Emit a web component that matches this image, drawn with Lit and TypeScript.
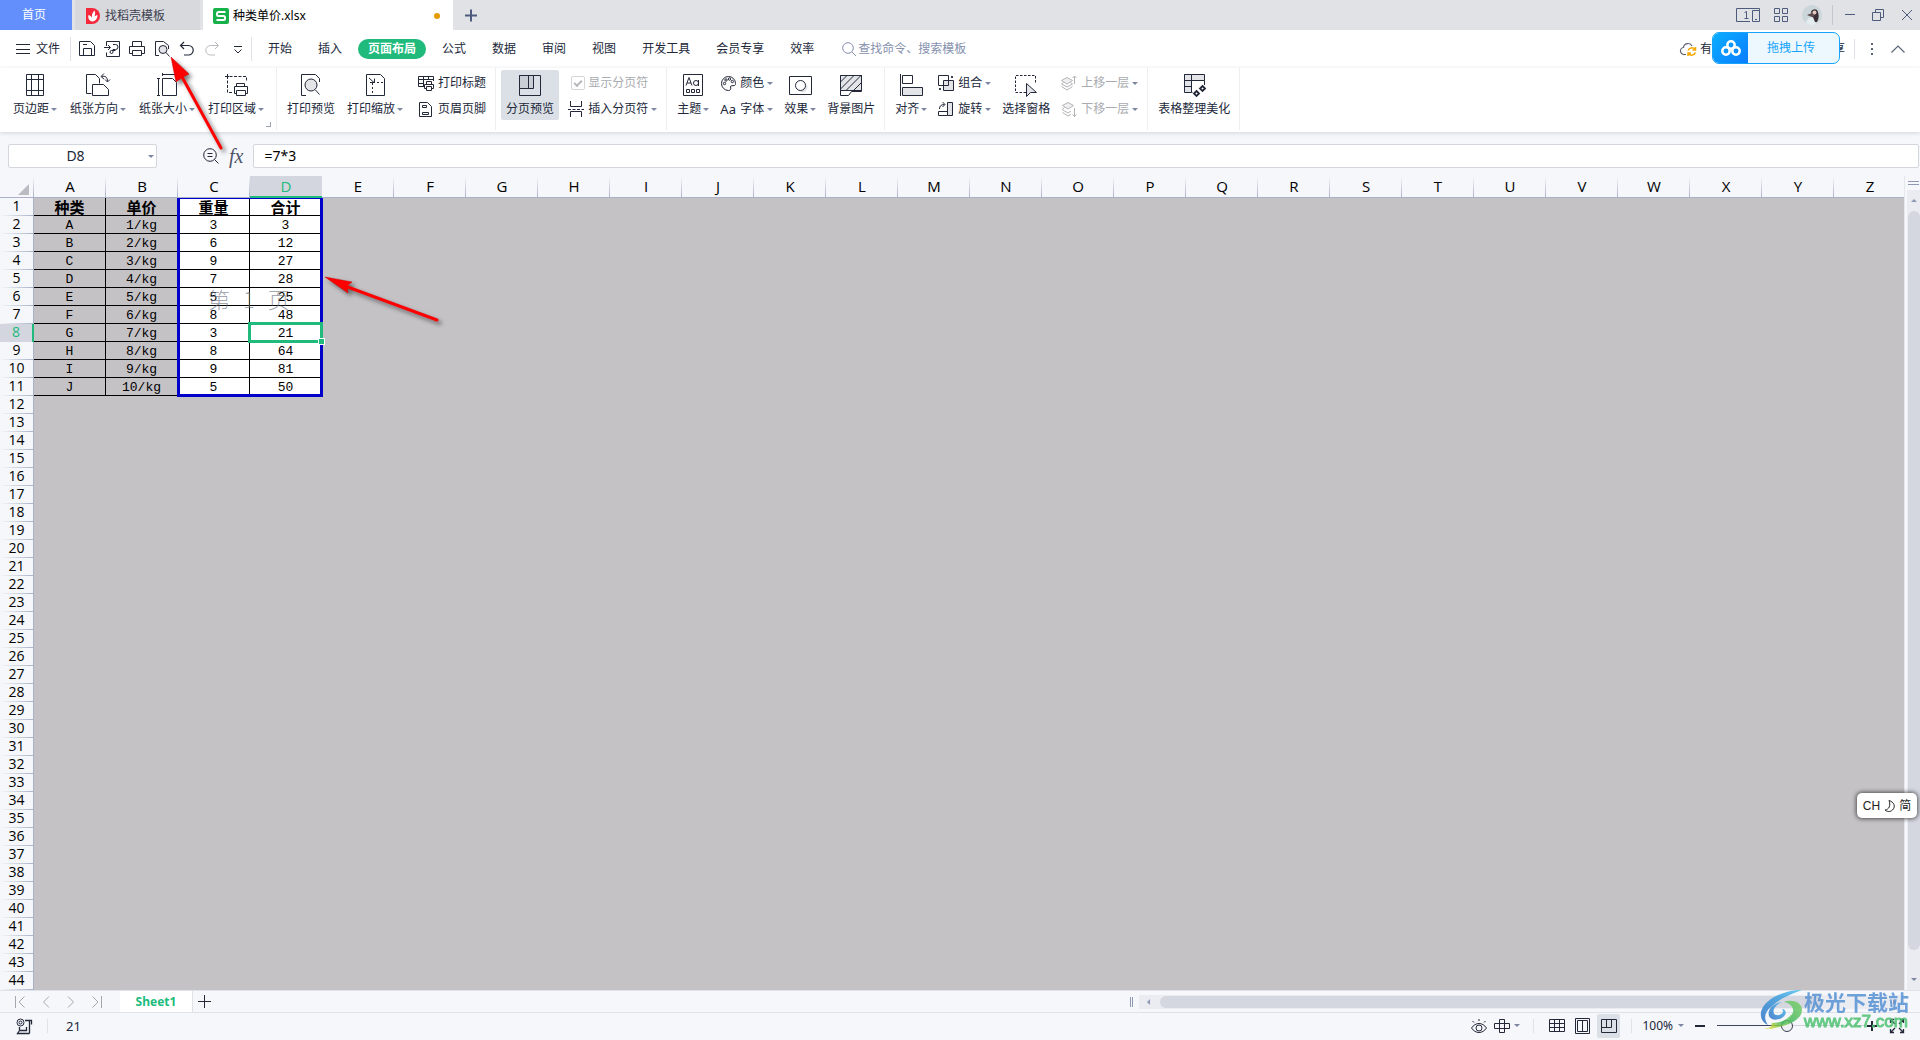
import { LitElement, html, css, svg, nothing, TemplateResult, SVGTemplateResult } from "lit";
import { customElement, property, state } from "lit/decorators.js";
import { classMap } from "lit/directives/class-map.js";

const icon = (w: number, h: number, body: SVGTemplateResult) => html`
  <svg class="ic" width=${w} height=${h} viewBox="0 0 ${w} ${h}" aria-hidden="true">${body}</svg>
`;

const SHADE = "#e2e4e7";

/* 16px glyphs */
const small: Record<string, SVGTemplateResult> = {
  save: svg`<path d="M.5.500h11l4 4v10H.5zM4.500 14.500v-7h8v7M4 3.500h4"/>`,
  exportPdf: svg`<path d="M2.500 5V.500h13v15h-13v-4M0 6.500h6M4 4l2.500 2.500L4 9M9 3.500h2.500a2 2 0 0 1 0 5H9M9 8.500v2.500a1.500 1.500 0 1 1-1.500-1.500h4"/>`,
  print: svg`<path d="M3.500 5.500v-5h9v5M3.500 12.500h-3v-7h15v7h-3M3.500 9.500h9v5h-9z"/>`,
  preview: svg`<circle cx="9" cy="8.500" r="4" fill=${SHADE}/><path d="M12 11.500l3.500 4M5 14.500H1.500V.500h8l5 4V8"/>`,
  undo: svg`<path d="M5 1L1.500 4.500L5 8M2 4.500h7.500a4.500 4.500 0 0 1 0 9.500H5" stroke-width="1.200"/>`,
  redo: svg`<g stroke="#b9bbc0"><path d="M11 1L14.500 4.500L11 8M14 4.500H6.500a4.500 4.500 0 0 0 0 9.500H11"/></g>`,
  more: svg`<path d="M5 5.500h8M5.500 8.500l3.500 3.500l3.500-3.500"/>`,
  printTitle: svg`<path d="M6 11.500H.5v-10h15V6M.5 4.500h15M5.500 1.500v10M10.500 1.500v3M.5 8.500h5M8.500 9.500V6.500h5v3M8.500 13.500h-2v-4h9v4h-2M8.500 11.500h5v4h-5z"/>`,
  headerFooter: svg`<path d="M1.500 1.500h8l4 4v10h-12z"/><path d="M4.500 4.500h4v2h-4zM4.500 11.500h6v2h-6z"/>`,
  insertBreak: svg`<path d="M2.500 0v5.500h11V0M2.500 16v-5.500h11V16"/><path d="M0 8.500h16" stroke-dasharray="3 1.500"/>`,
  palette: svg`<path d="M14.500 10.500c-2 .5-4-.5-4 1.500c.5 1.500.5 3.500-2 3.500a7 7 0 1 1 7-7c0 1 0 1.500-1 2z"/><circle cx="4.500" cy="8.500" r="1.200"/><circle cx="6" cy="5" r="1.200"/><circle cx="9.500" cy="4" r="1.200"/><circle cx="12.300" cy="6.500" r="1.200"/>`,
  group: svg`<path d="M.5.500h10v10H.5z"/><path d="M5.500 5.500h10v10h-10z" fill=${SHADE}/><path d="M10.500 5v5.500H5"/><path d="M13 1h2v2h-2zM1 13h2v2H1z" fill="#3a4252" stroke="none"/>`,
  rotate: svg`<path d="M9.500 1.500h5v13h-5z" fill=${SHADE}/><path d="M9.500 14.500h-9v-4h9M1.500 8c0-3 1.500-4.500 5-4.500M4.500 1L7 3.500L4.500 6"/>`,
  bringUp: svg`<g stroke="#b3b4b8"><path d="M.5 5.500L6 2.500l5.500 3L6 9z" fill="#f0f0f1"/><path d="M2.500 7.500L.5 9L6 12l5.500-3l-2-1.500M.5 11.500l5.500 3.500l5.500-3.500M13.500 9V1M11.500 3L13.500 1l2 2"/></g>`,
  sendDown: svg`<g stroke="#b3b4b8"><path d="M1.500 4.500L7 1.500l5.500 3L7 8z" fill="#f0f0f1"/><path d="M3.500 6.500l-2.500 2L7 12l3-2M1.500 11.500l5.500 3.500l3-1.500M13.500 7v8.500M11.500 13.500l2 2l2-2"/></g>`,
};

/* 24px glyphs */
const large: Record<string, SVGTemplateResult> = {
  margins: svg`<path d="M3.500 1.500h17v21h-17zM8.500 1.500v21M15.500 1.500v21M3.500 6.500h17M3.500 17.500h17"/>`,
  orientation: svg`<path d="M5.500 20.500h-5v-19h9l4 4v5"/><path d="M6.500 11.500h11l5 5v6h-16z"/><path d="M15.500 3.500c4-1 6 1 6 5M18 .5l-3 3l3 2.500M19 6.500l2.500 2.500L24 6.500"/>`,
  size: svg`<path d="M7.500 5.500h10l4 4v13h-14zM3.500 5v18M2 5.500h3M2 22.500h3M7 1.500h16M7.500 0v3M22.500 0v3"/>`,
  area: svg`<path d="M8 19.500H3.500v-16h19V9" stroke-dasharray="3 1.500"/><path d="M1 3.500h4M3.500 1v4M12.500 13.500v-3h8v3M12.500 20.500h-2v-7h13v7h-2M12.500 17.500h9v5h-9z"/>`,
  preview: svg`<path d="M7 22.500H2.500v-21h14l4 4V9"/><circle cx="12" cy="12" r="6" fill=${SHADE}/><path d="M16.500 17l4 4.500"/>`,
  scale: svg`<path d="M3.500 1.500h14l4 4v17h-18z"/><path d="M10 9.500h11M9.500 10v12" stroke-dasharray="2 2"/><path d="M6 5l5 4.500M11.500 5.500v4H7"/>`,
  pageBreak: svg`<path d="M1.500 2.500h21v20h-21z"/><path d="M1.500 2.500h14v13h-14z" fill="#c9ced6"/><path d="M10.500 2.500v13"/>`,
  theme: svg`<path d="M2.500 1.500h19v21h-19z"/><path d="M5.500 16.500h3v3h-3zM10.500 16.500h3v3h-3zM15.500 16.500h3v3h-3z"/><path d="M5 12.500L8 4.500l3 8M6 10h4"/><circle cx="15" cy="10" r="2.500"/><path d="M17.500 7v6"/>`,
  effect: svg`<path d="M1.500 3.500h22v18h-22z"/><circle cx="14.500" cy="14.500" r="5" fill=${SHADE} stroke="none"/><circle cx="12.500" cy="12.500" r="5" fill="#fff"/>`,
  background: svg`<path d="M1.500 2.500h21v16h-10l-3 4h-8z" fill="#fff"/><path d="M1.500 2.500h21v15h-21z" fill=${SHADE}/><path d="M1.500 9L8 2.500M1.500 16L15 2.500M7 17.500L22 2.500M14.500 17.500l8-8"/>`,
  align: svg`<path d="M1.500 1v22"/><path d="M3.500 2.500h10v8h-10z"/><path d="M3.500 14.500h20v8h-20z" fill=${SHADE}/>`,
  selectPane: svg`<path d="M12 19.500H1.500v-17h20V11" stroke-dasharray="2.500 1.500"/><path d="M12.500 10.500v13l4-4h6z" fill=${SHADE}/>`,
  beautify: svg`<path d="M2.500 1.500h20v6h-20z" fill=${SHADE}/><path d="M2.500 1.500h7v18h-7z" fill=${SHADE}/><path d="M22.500 8v4M9.500 19.500h1M2.500 7.500h20M2.500 13.500h7"/><g fill="#fff" stroke-width="1.800"><path d="M20.500 13l2.500 2.500l-2.500 2.500l-2.500-2.500z"/><path d="M14.500 18l2.500 2.500l-2.500 2.500l-2.500-2.500z"/></g>`,
};

const iconStyles = css`
  .ic {
    display: block;
    flex: none;
    fill: none;
    stroke: #232839;
    stroke-width: 1;
    overflow: visible;
  }
  button {
    font: inherit;
    color: inherit;
    background: none;
    border: 0;
    margin: 0;
    padding: 0;
    display: flex;
    align-items: center;
    white-space: nowrap;
  }
  input {
    font: inherit;
    color: inherit;
    margin: 0;
    box-sizing: border-box;
    outline: none;
  }
  .caret {
    width: 0;
    height: 0;
    border: 3px solid transparent;
    border-top: 3px solid #7d86a0;
    border-bottom: 0;
    flex: none;
  }
`;

@customElement("title-bar")
class TitleBar extends LitElement {
  static styles = [
    iconStyles,
    css`
      :host {
        display: flex;
        height: 30px;
        background: #e1e2e6;
        color: #3d4150;
      }
      .tab {
        padding: 0 0 0 10px;
        gap: 4px;
        box-sizing: border-box;
      }
      .home {
        width: 72px;
        justify-content: center;
        background: #628ffb;
        color: #fff;
        padding: 0 4px 0 0;
        margin-right: 3px;
      }
      .store {
        width: 125px;
        background: #d8d9dd;
        margin-right: 3px;
        padding-top: 2px;
      }
      .doc {
        width: 250px;
        background: #fff;
        color: #000;
        padding-top: 2px;
      }
      .dot {
        width: 6px;
        height: 6px;
        border-radius: 50%;
        background: #e69a00;
        margin: 0 13px 0 auto;
      }
      .add {
        padding: 0 11px;
      }
      .right,
      .apps {
        display: flex;
        align-items: center;
      }
      .right {
        margin-left: auto;
      }
      .apps {
        gap: 14px;
      }
      .wins {
        display: flex;
        align-items: center;
        gap: 17px;
        height: 20px;
        border-left: 1px solid #c3c6cf;
        margin: 0 7px 0 10px;
        padding-left: 12px;
      }
      .ic {
        stroke: #4d5b7c;
      }
    `,
  ];
  render() {
    return html`
      <button class="tab home">首页</button>
      <button class="tab store">
        ${icon(16, 16, svg`<path d="M1 0h6a8 8 0 0 1 0 16H1z" fill="#f5283c" stroke="none"/><path d="M7.500 13.500C4 13 2.500 9.500 3.500 7c2 .5 3 1.500 3.500 3C6.500 7 7.500 4 9.500 2.500c1 2 .8 4 0 6c1-1 2-1.500 3-1.500c0 3.500-2 6-5 6.500z" fill="#fff" stroke="none"/>`)}
        找稻壳模板
      </button>
      <button class="tab doc">
        ${icon(16, 16, svg`<rect width="16" height="16" rx="2" fill="#16b14b" stroke="none"/><path d="M12.500 4H5.500a1.500 1.500 0 0 0-1.500 1.500v1A1.500 1.500 0 0 0 5.500 8h5a1.500 1.500 0 0 1 1.500 1.500v1a1.500 1.500 0 0 1-1.500 1.500H3.500" stroke="#fff" stroke-width="2"/>`)}
        种类单价.xlsx<span class="dot"></span>
      </button>
      <button class="add" aria-label="+">
        ${icon(14, 14, svg`<path d="M7 1.500v12M1 7.500h12" stroke-width="2"/>`)}
      </button>
      <div class="right">
        <div class="apps">
          ${icon(24, 14, svg`<path d="M14 13.500H.5V.500h23v2M8.500 4.500l2-1v7.500M8.500 10.500h4M16.500 2.500h7v11h-7zM19 11.500h2"/>`)}
          ${icon(14, 14, svg`<path d="M.5.500h5v5h-5zM8.500.500h5v5h-5zM.5 8.500h5v5h-5zM8.500 8.500h5v5h-5z"/>`)}
          ${icon(20, 20, svg`<circle cx="10" cy="10" r="10" fill="#cbd6da" stroke="none"/><g stroke="none"><path d="M4 18c1-4 3-6 7-6l3 7a10 10 0 0 1-10-1z" fill="#e3edf0"/><path d="M9 7c1-3 6-4 7 0c1 3 1 7-1 10h-2l-2-5z" fill="#3a2f36"/><path d="M5 10l6-2.500l2 2l-2 3z" fill="#5d4b50"/><circle cx="12.500" cy="7.500" r="2" fill="#e5c8bd"/></g>`)}
        </div>
        <div class="wins">
          ${icon(10, 12, svg`<path d="M0 5.500h10"/>`)}
          ${icon(12, 12, svg`<path d="M.5 3.500h8v8h-8zM3.500 3.500v-3h8v8h-3"/>`)}
          ${icon(12, 12, svg`<path d="M1 1l10 10M11 1L1 11"/>`)}
        </div>
      </div>
    `;
  }
}

@customElement("menu-bar")
class MenuBar extends LitElement {
  @state() active = "页面布局";
  static styles = [
    iconStyles,
    css`
      :host {
        display: flex;
        align-items: center;
        height: 38px;
        background: #fff;
        color: #21283a;
      }
      .file {
        padding: 0 10px 0 16px;
        gap: 6px;
      }
      .quick {
        display: flex;
        align-items: center;
        gap: 9px;
        height: 24px;
        padding: 0 6px 0 8px;
        border: 1px solid #dfe1e6;
        border-width: 0 1px;
      }
      nav {
        display: flex;
        gap: 6px;
        padding-left: 6px;
      }
      .item {
        height: 20px;
        padding: 0 10px;
        border-radius: 10px;
      }
      .on {
        background: #20bb7c;
        color: #fff;
        font-weight: 700;
      }
      .search {
        display: flex;
        align-items: center;
        gap: 2px;
        margin-left: 18px;
      }
      .search input {
        width: 130px;
        border: 0;
        padding: 0;
        background: none;
      }
      .search input::placeholder {
        color: #8590ad;
        opacity: 1;
      }
      .search .ic {
        stroke: #8590ad;
      }
      .right {
        display: flex;
        align-items: center;
        margin: 0 15px 0 auto;
      }
      .sync {
        gap: 4px;
      }
      .share {
        margin-left: 121px;
        padding-right: 9px;
        border-right: 1px solid #dfe1e6;
        height: 20px;
      }
      .dots {
        margin: 0 17px 0 15px;
      }
    `,
  ];
  render() {
    const tabs = ["开始", "插入", "页面布局", "公式", "数据", "审阅", "视图", "开发工具", "会员专享", "效率"];
    return html`
      <button class="file">${icon(14, 10, svg`<path d="M0 .5h14M0 5.500h14M0 9.500h14"/>`)}文件</button>
      <div class="quick">
        ${["save", "exportPdf", "print", "preview", "undo", "redo", "more"].map(
          (k) => html`<button aria-label=${k}>${icon(16, 16, small[k])}</button>`
        )}
      </div>
      <nav>
        ${tabs.map(
          (t) => html`<button class=${classMap({ item: true, on: t === this.active })} @click=${() => (this.active = t)}>${t}</button>`
        )}
      </nav>
      <label class="search">
        ${icon(14, 14, svg`<circle cx="6" cy="6" r="5.300"/><path d="M10 10l4 4"/>`)}
        <input type="search" placeholder="查找命令、搜索模板" />
      </label>
      <div class="right">
        <button class="sync">
          ${icon(16, 14, svg`<path d="M6 12.500H4.500a3.500 3.500 0 0 1-1-7a4.500 4.500 0 0 1 8.500-1.500" stroke="#5d6270" stroke-width="1.200"/><g stroke="#f5a800" stroke-width="1.500"><path d="M8 8.500a4 4 0 0 1 7-1M15.500 5v3h-3M15.500 10.500a4 4 0 0 1-7 1M8 14v-3h3"/></g>`)}有
        </button>
        <button class="share">享</button>
        <button class="dots" aria-label="⋮">${icon(4, 14, svg`<path d="M1 1h2v2H1zM1 6h2v2H1zM1 11h2v2H1z" fill="#5c6478" stroke="none"/>`)}</button>
        <button aria-label="︿">${icon(14, 8, svg`<path d="M.5 7.500l6.500-6.500l6.500 6.500" stroke="#5c6478" stroke-width="1.200"/>`)}</button>
      </div>
    `;
  }
}

@customElement("ribbon-button")
class RibbonButton extends LitElement {
  @property() label = "";
  @property() glyph = "";
  @property({ type: Boolean }) big = false;
  @property({ type: Boolean }) menu = false;
  @property({ type: Boolean }) off = false;
  @property({ type: Boolean }) pressed = false;
  static styles = [
    iconStyles,
    css`
      :host {
        display: block;
      }
      .big {
        flex-direction: column;
        height: 50px;
        padding-top: 3px;
        gap: 4px;
      }
      .row {
        display: flex;
        align-items: center;
        gap: 2px;
        height: 16px;
      }
      .small {
        gap: 4px;
        height: 20px;
      }
      .small .caret {
        margin-left: -1px;
      }
      .off {
        color: #a9abb0;
      }
      .pressed {
        background: #dae0e5;
        border-radius: 2px;
        padding: 3px 5px 0;
      }
      .aa {
        width: 16px;
        font-size: 13px;
        display: flex;
        justify-content: center;
      }
    `,
  ];
  render() {
    const caret = this.menu ? html`<span class="caret"></span>` : nothing;
    if (this.big) {
      return html`<button class=${classMap({ big: true, pressed: this.pressed })}>
        ${icon(24, 24, large[this.glyph])}<span class="row">${this.label}${caret}</span>
      </button>`;
    }
    const mark = this.glyph === "aa" ? html`<span class="aa">Aa</span>` : icon(16, 16, small[this.glyph]);
    return html`<button class=${classMap({ small: true, off: this.off })} ?disabled=${this.off}>
      ${mark}<span>${this.label}</span>${caret}
    </button>`;
  }
}

const big = (label: string, glyph: string, menu = false, pressed = false) =>
  html`<ribbon-button big .label=${label} .glyph=${glyph} .menu=${menu} .pressed=${pressed}></ribbon-button>`;
const mini = (label: string, glyph: string, menu = false, off = false) =>
  html`<ribbon-button .label=${label} .glyph=${glyph} .menu=${menu} .off=${off}></ribbon-button>`;

@customElement("ribbon-bar")
class RibbonBar extends LitElement {
  static styles = [
    iconStyles,
    css`
      :host {
        display: flex;
        height: 64px;
        background: #fff;
        color: #21283a;
        box-shadow: 0 1px 4px rgba(60, 70, 90, 0.2);
        position: relative;
      }
      .group {
        display: flex;
        align-items: flex-start;
        position: relative;
        height: 62px;
        box-sizing: border-box;
        padding: 2px 9px 0 10px;
        gap: 11px;
        border-right: 1px solid #eceef1;
      }
      .first {
        padding: 2px 12px 0 13px;
        gap: 13px;
      }
      .print {
        gap: 12px;
      }
      .print .col {
        padding-left: 3px;
      }
      .tight {
        padding-left: 5px;
        gap: 9px;
      }
      .col {
        display: flex;
        flex-direction: column;
        align-items: flex-start;
        gap: 6px;
        padding-top: 3px;
      }
      .corner {
        position: absolute;
        right: 5px;
        bottom: 3px;
        width: 4px;
        height: 4px;
        border: 1px solid #9aa0b0;
        border-width: 0 1px 1px 0;
      }
      .check {
        display: flex;
        align-items: center;
        gap: 3px;
        height: 20px;
        padding-left: 3px;
        color: #a9abb0;
      }
      .check input {
        appearance: none;
        width: 14px;
        height: 14px;
        border: 1px solid #d5d6d9;
        border-radius: 2px;
        display: grid;
        place-items: center;
      }
      .check input:checked::before {
        content: "";
        width: 6px;
        height: 3px;
        border: 2px solid #b4b6ba;
        border-width: 0 0 2px 2px;
        transform: rotate(-45deg);
        margin-bottom: 2px;
      }
    `,
  ];
  render() {
    return html`
      <div class="group first">
        ${big("页边距", "margins", true)}${big("纸张方向", "orientation", true)}${big("纸张大小", "size", true)}${big("打印区域", "area", true)}
        <span class="corner"></span>
      </div>
      <div class="group print">
        ${big("打印预览", "preview")}${big("打印缩放", "scale", true)}
        <div class="col">${mini("打印标题", "printTitle")}${mini("页眉页脚", "headerFooter")}</div>
      </div>
      <div class="group tight">
        ${big("分页预览", "pageBreak", false, true)}
        <div class="col">
          <label class="check"><input type="checkbox" checked disabled />显示分页符</label>
          ${mini("插入分页符", "insertBreak", true)}
        </div>
      </div>
      <div class="group">
        ${big("主题", "theme", true)}
        <div class="col">${mini("颜色", "palette", true)}${mini("字体", "aa", true)}</div>
        ${big("效果", "effect", true)}${big("背景图片", "background")}
      </div>
      <div class="group">
        ${big("对齐", "align", true)}
        <div class="col">${mini("组合", "group", true)}${mini("旋转", "rotate", true)}</div>
        ${big("选择窗格", "selectPane")}
        <div class="col">${mini("上移一层", "bringUp", true, true)}${mini("下移一层", "sendDown", true, true)}</div>
      </div>
      <div class="group">${big("表格整理美化", "beautify")}</div>
    `;
  }
}

@customElement("formula-bar")
class FormulaBar extends LitElement {
  static styles = [
    iconStyles,
    css`
      :host {
        display: flex;
        align-items: flex-start;
        padding: 12px 1px 8px 8px;
        font-size: 14px;
        color: #21283a;
      }
      .name,
      .formula {
        border: 1px solid #d3d6dd;
        border-radius: 2px;
        background: #fff;
        height: 24px;
        box-sizing: border-box;
      }
      .name {
        display: flex;
        align-items: center;
        width: 149px;
        padding-right: 2px;
      }
      .name input {
        flex: 1;
        min-width: 0;
        border: 0;
        padding: 0 6px 0 0;
        text-align: center;
        background: none;
      }
      .tools {
        display: flex;
        align-items: center;
        gap: 10px;
        height: 24px;
        margin: 0 10px 0 46px;
      }
      .fx {
        font: italic 20px "Liberation Serif", serif;
        color: #4d5468;
        line-height: 24px;
      }
      .formula {
        flex: 1;
        min-width: 0;
        padding: 0 10px 2px;
        color: #000;
      }
    `,
  ];
  render() {
    return html`
      <div class="name">
        <input aria-label="D8" .value=${"D8"} />
        <button aria-label="▾"><span class="caret"></span></button>
      </div>
      <div class="tools">
        <button aria-label="=">${icon(16, 16, svg`<circle cx="7" cy="7" r="6.300"/><path d="M11.500 11.500l4 4M4.500 5.500h5M4.500 8.500h5"/>`)}</button>
        <button class="fx">fx</button>
      </div>
      <input class="formula" aria-label="fx" .value=${"=7*3"} />
    `;
  }
}

const COLS = "ABCDEFGHIJKLMNOPQRSTUVWXYZ".split("");
const DATA: string[][] = [
  ["种类", "单价", "重量", "合计"],
  ["A", "1/kg", "3", "3"],
  ["B", "2/kg", "6", "12"],
  ["C", "3/kg", "9", "27"],
  ["D", "4/kg", "7", "28"],
  ["E", "5/kg", "5", "25"],
  ["F", "6/kg", "8", "48"],
  ["G", "7/kg", "3", "21"],
  ["H", "8/kg", "8", "64"],
  ["I", "9/kg", "9", "81"],
  ["J", "10/kg", "5", "50"],
];

@customElement("sheet-grid")
class SheetGrid extends LitElement {
  static styles = [
    iconStyles,
    css`
      :host {
        display: flex;
        flex: 1;
      }
      .view {
        position: relative;
        flex: 1;
        min-width: 0;
        overflow: hidden;
        background: linear-gradient(#f5f7fa 22px, #c5c2c6 22px);
        border-right: 1px solid #e6e7ee;
      }
      table {
        border-collapse: separate;
        border-spacing: 0;
      }
      th,
      td {
        padding: 0;
        box-sizing: border-box;
        white-space: nowrap;
        text-align: center;
      }
      th {
        font-family: "Open Sans", sans-serif;
        vertical-align: top;
      }
      thead th {
        min-width: 72px;
        height: 22px;
        line-height: 21px;
        font-size: 15px;
        font-weight: 400;
        color: #000;
        border-bottom: 1px solid #a9b2c8;
        background: linear-gradient(#f5f7fa, #aab3c8) right / 1px 100% no-repeat #f5f7fa;
      }
      thead .pick {
        background: #d3d6de;
        color: #20bb7c;
        border-bottom: 2px solid #20bb7c;
        line-height: 20px;
      }
      thead .all {
        min-width: 34px;
      }
      .all svg {
        margin: 8px 0 0 18px;
      }
      tbody th {
        height: 18px;
        line-height: 16px;
        font-size: 14px;
        font-weight: 400;
        color: #000;
        border-right: 1px solid #a9b2c8;
        background: linear-gradient(90deg, #f5f7fa, #aab3c8) bottom / 100% 1px no-repeat #f5f7fa;
      }
      tbody .pick {
        background: #d3d6de;
        color: #20bb7c;
        border-right: 2px solid #20bb7c;
      }
      td {
        height: 18px;
        background: #c5c2c6;
      }
      .cell {
        font: 13px "Liberation Mono", "Noto Sans CJK SC", monospace;
        line-height: 14px;
        padding-top: 3px;
        color: #000;
        border: 1px solid #000;
        border-width: 0 1px 1px 0;
      }
      .head {
        font: 700 15px "Noto Sans CJK SC", sans-serif;
        line-height: 17px;
        padding: 0;
      }
      .in {
        background: #fff;
      }
      .page {
        position: absolute;
        left: 177px;
        top: 22px;
        width: 146px;
        height: 199px;
        box-sizing: border-box;
        border: 3px solid #0000c8;
        border-top-width: 1px;
        pointer-events: none;
      }
      .mark {
        position: absolute;
        left: 208px;
        top: 108px;
        display: flex;
        gap: 13px;
        font: 300 22px "Noto Sans CJK SC", sans-serif;
        line-height: 28px;
        color: rgba(110, 115, 130, 0.65);
        pointer-events: none;
      }
      .sel {
        position: absolute;
        left: 248px;
        top: 146px;
        width: 75px;
        height: 21px;
        box-sizing: border-box;
        border: 3px solid #20bb7c;
      }
      .knob {
        position: absolute;
        right: -5px;
        bottom: -5px;
        width: 5px;
        height: 5px;
        background: #20bb7c;
        border: 1px solid #fff;
      }
      .bar {
        width: 15px;
        display: flex;
        flex-direction: column;
        align-items: center;
        background: #ebecf1;
        border-left: 2px solid #f5f7fa;
        box-sizing: border-box;
      }
      .split {
        width: 100%;
        height: 14px;
        background: #f5f7fa;
        display: flex;
        justify-content: center;
      }
      .ic {
        stroke: #8f99b3;
      }
      .up,
      .down {
        height: 20px;
      }
      .down {
        height: 22px;
      }
      .thumb {
        flex: 1;
        width: 12px;
        border-radius: 6px;
        background: #d4d7e0;
        margin: 1px 0 18px;
      }
      .tri-up {
        border: 3px solid transparent;
        border-top: 0;
        border-bottom: 3px solid #8f99b3;
      }
    `,
  ];
  private cell(r: number, c: number): TemplateResult {
    const text = DATA[r]?.[c];
    if (text === undefined) return html`<td></td>`;
    return html`<td class=${classMap({ cell: true, head: r === 0, in: c > 1 })}>${text}</td>`;
  }
  render() {
    return html`
      <div class="view">
        <table>
          <thead>
            <tr>
              <th class="all">${icon(11, 11, svg`<path d="M11 0v11H0z" fill="#b9bcc2" stroke="none"/>`)}</th>
              ${COLS.map((c) => html`<th scope="col" class=${c === "D" ? "pick" : ""}>${c}</th>`)}
            </tr>
          </thead>
          <tbody>
            ${Array.from({ length: 44 }, (_, r) => html`
              <tr>
                <th scope="row" class=${r === 7 ? "pick" : ""}>${r + 1}</th>
                ${COLS.map((_c, c) => this.cell(r, c))}
              </tr>
            `)}
          </tbody>
        </table>
        <div class="page"></div>
        <div class="mark"><span>第</span><span>1</span><span>页</span></div>
        <div class="sel"><span class="knob"></span></div>
      </div>
      <div class="bar">
        <div class="split">${icon(11, 10, svg`<path d="M0 5.500h11M0 8.500h11"/>`)}</div>
        <button class="up" aria-label="▴"><span class="tri-up"></span></button>
        <div class="thumb"></div>
        <button class="down" aria-label="▾"><span class="caret"></span></button>
      </div>
    `;
  }
}

@customElement("sheet-tabs")
class SheetTabs extends LitElement {
  static styles = [
    iconStyles,
    css`
      :host {
        display: flex;
        height: 23px;
        box-sizing: border-box;
        border: 1px solid #dfe2e9;
        border-width: 1px 0;
      }
      .nav {
        display: flex;
        align-items: center;
        gap: 17px;
        padding: 0 18px 0 15px;
      }
      .nav .ic {
        stroke: #a3a7b0;
      }
      .tab {
        width: 73px;
        justify-content: center;
        background: #fff;
        border-right: 1px solid #dfe2e9;
        color: #20bb7c;
        font-weight: 700;
      }
      .add {
        padding: 0 5px;
      }
      .scroll {
        display: flex;
        align-items: center;
        flex: 0 1 774px;
        margin: 0 16px 0 auto;
        gap: 6px;
      }
      .grip .ic {
        stroke: #8f99b3;
      }
      .track {
        flex: 1;
        display: flex;
        align-items: center;
        height: 14px;
        background: #ebecf1;
        padding: 0 8px;
      }
      .left,
      .rt {
        border: 3px solid transparent;
        border-right: 3px solid #8f99b3;
        border-left: 0;
      }
      .rt {
        border-right: 0;
        border-left: 3px solid #8f99b3;
      }
      .thumb {
        flex: 1;
        height: 12px;
        border-radius: 6px;
        background: #d4d7e0;
        margin: 0 72px 0 10px;
      }
    `,
  ];
  render() {
    return html`
      <div class="nav">
        <button aria-label="|<">${icon(10, 12, svg`<path d="M.5 0v12M9.500.500L4 6l5.500 5.500"/>`)}</button>
        <button aria-label="<">${icon(8, 12, svg`<path d="M7 .5L1.500 6L7 11.500"/>`)}</button>
        <button aria-label=">">${icon(8, 12, svg`<path d="M1 .5L6.500 6L1 11.500"/>`)}</button>
        <button aria-label=">|">${icon(10, 12, svg`<path d="M9.500 0v12M.5.500L6 6L.5 11.500"/>`)}</button>
      </div>
      <button class="tab">Sheet1</button>
      <button class="add" aria-label="+">${icon(13, 13, svg`<path d="M6.500 0v13M0 6.500h13"/>`)}</button>
      <div class="scroll">
        <span class="grip">${icon(3, 10, svg`<path d="M.5 0v10M2.500 0v10"/>`)}</span>
        <div class="track"><span class="left"></span><span class="thumb"></span><span class="rt"></span></div>
      </div>
    `;
  }
}

@customElement("status-bar")
class StatusBar extends LitElement {
  @state() zoom = 47;
  static styles = [
    iconStyles,
    css`
      :host {
        display: flex;
        align-items: center;
        height: 27px;
        padding-bottom: 2px;
        box-sizing: border-box;
        color: #21283a;
      }
      .tool {
        padding: 0 15px 0 16px;
      }
      .sum {
        height: 14px;
        line-height: 14px;
        border-left: 1px solid #dfe2e9;
        padding-left: 18px;
        font-size: 13px;
      }
      .right {
        display: flex;
        align-items: center;
        margin: 0 16px 0 auto;
      }
      .read {
        gap: 4px;
        display: flex;
        align-items: center;
        padding-right: 13px;
      }
      .eye {
        margin-right: 3px;
      }
      .views {
        display: flex;
        padding: 0 11px;
        gap: 3px;
        border: 1px solid #dfe2e9;
        border-width: 0 1px;
        height: 14px;
        align-items: center;
      }
      .view {
        width: 23px;
        height: 24px;
        justify-content: center;
        border-radius: 2px;
      }
      .on {
        background: #dae0e5;
      }
      .pct {
        gap: 5px;
        padding: 0 11px 0 10px;
      }
      .range {
        appearance: none;
        width: 148px;
        height: 14px;
        margin: 0 2px 0 12px;
        background: linear-gradient(90deg, #3d4560 47%, #cfd2da 47%) center / 100% 1px no-repeat;
      }
      .range::-webkit-slider-thumb {
        appearance: none;
        width: 12px;
        height: 12px;
        border-radius: 50%;
        border: 1px solid #3d4150;
        background: #eef0f3;
        box-sizing: border-box;
      }
      .full {
        margin-left: 13px;
      }
    `,
  ];
  render() {
    return html`
      <button class="tool" aria-label="⚙">
        ${icon(16, 16, svg`<circle cx="4.500" cy="4.500" r="3.500"/><circle cx="4.500" cy="4.500" r="1.500"/><path d="M9 2.500h6.500v4M13.500 3v12.500M3.500 9v3M3.500 12.500l-2 3h12M10.500 9v3.500h-7" stroke-width="1.300"/>`)}
      </button>
      <span class="sum">21</span>
      <div class="right">
        <div class="read">
          <button class="eye" aria-label="👁">${icon(16, 16, svg`<path d="M.5 10c4-6 11-6 15 0c-4 6-11 6-15 0z"/><circle cx="8" cy="10" r="3"/><path d="M8 1v2M1.500 3l1.500 1.500M14.500 3L13 4.500"/>`)}</button>
          <button aria-label="✚">${icon(16, 16, svg`<path d="M5.500 1.500h5v13h-5zM.5 5.500h15v5H.5z"/>`)}</button>
          <span class="caret"></span>
        </div>
        <div class="views">
          <button class="view" aria-label="▦">${icon(16, 14, svg`<path d="M.5.500h15v12H.5zM.5 4.500h15M.5 8.500h15M5.500.500v12M10.500.500v12"/>`)}</button>
          <button class="view" aria-label="▥">${icon(15, 16, svg`<path d="M.5.500h14v15H.5zM2.500 2.500h10v11h-10zM7.500 2.500v11"/>`)}</button>
          <button class="view on" aria-label="◱">${icon(16, 14, svg`<path d="M.5.500h15v13H.5zM.5 8.500h10v-8M5.500.500v8"/>`)}</button>
        </div>
        <button class="pct">100%<span class="caret"></span></button>
        <button aria-label="−">${icon(10, 10, svg`<path d="M0 5h10" stroke-width="2"/>`)}</button>
        <input class="range" type="range" aria-label="100%" min="0" max="100" .value=${String(this.zoom)} />
        <button aria-label="+">${icon(10, 10, svg`<path d="M0 5h10M5 0v10" stroke-width="2"/>`)}</button>
        <button class="full" aria-label="⛶">${icon(14, 14, svg`<path d="M.5 4V.5H4M10 .5h3.500V4M13.500 10v3.500H10M4 13.500H.5V10M1 1l4 4M13 1L9 5M13 13L9 9M1 13l4-4" stroke-width="1.300"/>`)}</button>
      </div>
    `;
  }
}

@customElement("app-root")
class AppRoot extends LitElement {
  static styles = [
    iconStyles,
    css`
      :host {
        display: flex;
        flex-direction: column;
        position: relative;
        min-height: 100vh;
        overflow: hidden;
        background: #f5f7fa;
        font: 12px/16px "Noto Sans", "Noto Sans CJK SC", sans-serif;
      }
      .upload {
        position: absolute;
        top: 32px;
        right: 80px;
        width: 128px;
        height: 32px;
        box-sizing: border-box;
        border: 1px solid #16a4fb;
        border-radius: 7px;
        overflow: hidden;
        background: #edf7fe;
        color: #16a4fb;
      }
      .cloud {
        display: flex;
        align-items: center;
        justify-content: center;
        width: 35px;
        height: 100%;
        background: linear-gradient(135deg, #0aaeff, #0a7cff);
        margin-right: 19px;
      }
      .cloud .ic {
        stroke: #fff;
        stroke-width: 3;
      }
      .ime {
        position: absolute;
        right: 3px;
        bottom: 222px;
        display: flex;
        align-items: center;
        justify-content: center;
        gap: 4px;
        width: 60px;
        height: 25px;
        border-radius: 5px;
        background: #fff;
        box-shadow: 0 0 4px 1px rgba(0, 0, 0, 0.6);
        color: #222;
        font-family: "Liberation Sans", "Noto Sans CJK SC", sans-serif;
      }
      .arrows {
        position: absolute;
        left: 160px;
        top: 50px;
        filter: drop-shadow(3px 3px 2px rgba(0, 0, 0, 0.5));
        pointer-events: none;
      }
      .brand {
        position: absolute;
        right: 11px;
        bottom: 8px;
        display: flex;
        gap: 2px;
        pointer-events: none;
        opacity: 0.85;
      }
      .words {
        display: flex;
        flex-direction: column;
        font-family: "Noto Sans CJK SC", sans-serif;
      }
      .zh {
        font-size: 21px;
        line-height: 22px;
        font-weight: 700;
        color: #5792d4;
      }
      .url {
        font: 17px "Liberation Sans", sans-serif;
        line-height: 20px;
        color: #4fc272;
        -webkit-text-stroke: 1px #4fc272;
      }
    `,
  ];
  render() {
    return html`
      <title-bar></title-bar>
      <menu-bar></menu-bar>
      <ribbon-bar></ribbon-bar>
      <formula-bar></formula-bar>
      <sheet-grid></sheet-grid>
      <sheet-tabs></sheet-tabs>
      <status-bar></status-bar>
      <button class="upload">
        <span class="cloud">${icon(20, 16, svg`<circle cx="10" cy="5" r="3.700" stroke-width="2.500"/><circle cx="5" cy="11" r="3.700" stroke-width="2.500"/><circle cx="15" cy="11" r="3.700" stroke-width="2.500"/>`)}</span>拖拽上传
      </button>
      <div class="ime">
        <span>CH</span>
        ${icon(11, 12, svg`<path d="M5 .5c5 1.500 7 6 3.500 9.500c-2 2-5.500 2-7.500 0c4-.5 6-4.500 4-9.500z" stroke="#222"/>`)}
        <span>简</span>
      </div>
      <svg class="arrows" width="290" height="280" viewBox="160 50 290 280" aria-hidden="true">
        <g fill="#fe0000" stroke="#fe0000">
          <path d="M171 57L189 74L183 77L176 82z" stroke="#c00" stroke-width=".5" />
          <path d="M181 75L221 148" stroke-width="3" stroke-linecap="round" />
          <path d="M325 277L352 282L347 286L348 293z" stroke="#c00" stroke-width=".5" />
          <path d="M345 286L437 320" stroke-width="3" stroke-linecap="round" />
        </g>
      </svg>
      <div class="brand">
        ${icon(42, 40, svg`<defs>
            <linearGradient id="b" x1="0" y1="1" x2="1" y2="0"><stop offset="0" stop-color="#2f6fc4"/><stop offset="1" stop-color="#4ec0f0"/></linearGradient>
            <linearGradient id="g" x1="0" y1="1" x2="1" y2="0"><stop offset="0" stop-color="#e8e23a"/><stop offset=".5" stop-color="#45b85c"/><stop offset="1" stop-color="#7fd06a"/></linearGradient>
          </defs><g stroke="none">
          <path d="M42 0C24 0 4 9 1 22c-1 6 2 11 7 13c-5-7-3-13 3-18c6-6 16-12 31-17z" fill="url(#b)"/>
          <path d="M22 12c-9 1-15 8-13 14c2 5 12 5 16-1c2-3 0-6-3-6c3 3-1 7-6 6c-5-2-2-10 6-13z" fill="url(#b)"/>
          <path d="M24 12c8-3 18 0 18 8c0 10-16 18-38 19c16-4 27-10 29-17c1-5-3-9-9-10z" fill="url(#g)"/>
          <path d="M12 33c8 0 16-3 19-9c0 7-8 13-21 15z" fill="url(#g)"/>
        </g>`)}
        <div class="words"><span class="zh">极光下载站</span><span class="url">www.xz7.com</span></div>
      </div>
    `;
  }
}
